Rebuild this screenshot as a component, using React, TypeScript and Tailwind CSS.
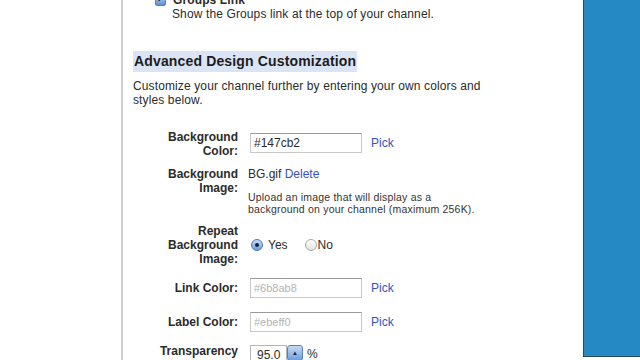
import React from "react";

const font = { fontFamily: '"Liberation Sans", Arial, sans-serif' };

function Label({ lines }: { lines: string[] }) {
  return (
    <div className="w-[105px] shrink-0 text-right text-[12px] font-bold leading-[14px] text-[#2b2b2b]">
      {lines.map((l, i) => (
        <div key={i}>{l}</div>
      ))}
    </div>
  );
}

function TextBox({ value, muted }: { value: string; muted?: boolean }) {
  return (
    <div
      className={`ml-[2px] flex h-[20px] w-[112px] items-center border border-[#c9c9c9] border-t-[#9a9a9a] bg-white pl-[3px] ${
        muted ? "text-[11px] text-[#b3b3b3]" : "text-[12px] text-[#2b2b2b]"
      }`}
    >
      {value}
    </div>
  );
}

function Pick() {
  return <span className="ml-[9px] text-[12px] text-[#3550c4]">Pick</span>;
}

export default function App() {
  return (
    <div className="flex h-[360px] w-[640px] overflow-hidden bg-white" style={font}>
      <div className="w-[121px] shrink-0 bg-white" />
      <div className="w-[2px] shrink-0 bg-[#cfcfcf]" />
      <div className="flex-1 pl-[10px] text-[#2b2b2b]">
        {/* Groups link */}
        <div className="mt-[-7px] flex items-center text-[12px] leading-[14px] tracking-[0.12px]">
          <span className="ml-[22px] mr-[7px] inline-flex h-[11px] w-[11px] items-center justify-center rounded-[2px] border border-[#5a7fb8] bg-gradient-to-b from-[#b9d2f0] to-[#5d8fd0] text-[8px] leading-none text-[#10203a]">
            ✓
          </span>
          <span className="font-bold">Groups Link</span>
        </div>
        <div className="pl-[39px] text-[12px] leading-[14px] tracking-[0.12px]">
          Show the Groups link at the top of your channel.
        </div>

        {/* Heading */}
        <div className="mt-[28px]">
          <span className="inline-block bg-[#dbe4f5] px-[1px] py-[3px] text-[14px] font-bold leading-[15px] tracking-[0.15px] text-[#1c1c1c]">
            Advanced Design Customization
          </span>
        </div>
        <div className="mt-[6px] text-[12px] leading-[14px] tracking-[0.12px]">
          Customize your channel further by entering your own colors and
          <br />
          styles below.
        </div>

        {/* Background color */}
        <div className="mt-[23px] flex">
          <Label lines={["Background", "Color:"]} />
          <div className="ml-[10px] mt-[3px] flex h-[20px] items-center">
            <TextBox value="#147cb2" />
            <Pick />
          </div>
        </div>

        {/* Background image */}
        <div className="mt-[9px] flex">
          <Label lines={["Background", "Image:"]} />
          <div className="ml-[10px]">
            <div className="text-[12px] leading-[14px]">
              BG.gif <span className="text-[#3550c4]">Delete</span>
            </div>
            <div className="mt-[10px] text-[10.5px] leading-[12px] tracking-[0.2px] text-[#333]">
              Upload an image that will display as a
              <br />
              background on your channel (maximum 256K).
            </div>
          </div>
        </div>

        {/* Repeat */}
        <div className="mt-[9px] flex items-center">
          <Label lines={["Repeat", "Background", "Image:"]} />
          <div className="ml-[13px] flex items-center text-[12px]">
            <span className="inline-flex h-[12px] w-[12px] items-center justify-center rounded-full border border-[#4f78b8] bg-gradient-to-b from-[#c6dbf5] to-[#6f9fdc]">
              <span className="h-[4px] w-[4px] rounded-full bg-[#13233f]" />
            </span>
            <span className="ml-[5px]">Yes</span>
            <span className="ml-[17px] inline-block h-[12px] w-[12px] rounded-full border border-[#a8a8a8] bg-gradient-to-b from-white to-[#e2e2e2]" />
            <span className="ml-[1px]">No</span>
          </div>
        </div>

        {/* Link color */}
        <div className="mt-[12px] flex items-center">
          <Label lines={["Link Color:"]} />
          <div className="ml-[10px] flex items-center">
            <TextBox value="#6b8ab8" muted />
            <Pick />
          </div>
        </div>

        {/* Label color */}
        <div className="mt-[14px] flex items-center">
          <Label lines={["Label Color:"]} />
          <div className="ml-[10px] flex items-center">
            <TextBox value="#ebeff0" muted />
            <Pick />
          </div>
        </div>

        {/* Transparency */}
        <div className="mt-[12px] flex items-start">
          <Label lines={["Transparency"]} />
          <div className="ml-[12px] mt-[1px] flex items-start">
            <div className="flex h-[20px] w-[37px] items-center border border-[#b5b5b5] pl-[6px] text-[12px]">
              95.0
            </div>
            <div className="flex h-[16px] w-[16px] flex-col items-center justify-center rounded-[3px] border border-[#5a7fb8] bg-gradient-to-b from-[#c6dbf5] to-[#6f9fdc] text-[6px] leading-[6px] text-[#13233f]">
              ▲
            </div>
            <span className="ml-[4px] text-[12px]">%</span>
          </div>
        </div>
      </div>
      <div className="flex w-[57px] shrink-0 flex-col">
        <div className="h-[357px] border-b border-l border-[#2a4a60] bg-[#2589c3]" />
      </div>
    </div>
  );
}
